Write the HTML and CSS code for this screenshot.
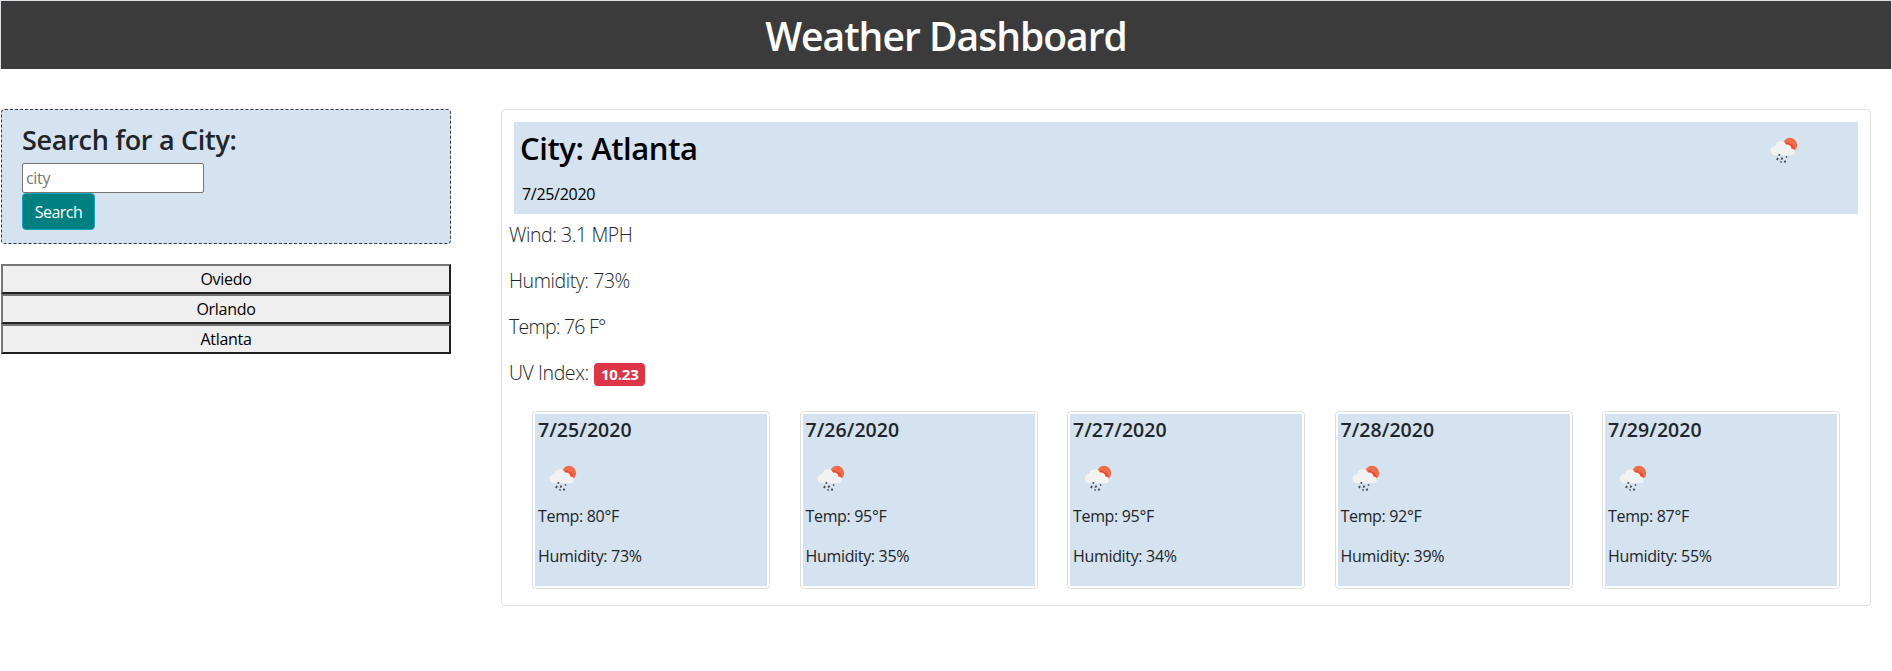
FILE: index.html
```html
<!DOCTYPE html>
<html lang="en">
<head>
<meta charset="utf-8">
<title>Weather Dashboard</title>
<link rel="stylesheet" href="styles.css">
</head>
<body>
<svg class="sprite" aria-hidden="true">
  <symbol id="rain" viewBox="0 0 50 50">
    <circle cx="31" cy="19" r="7.200" fill="#ec6e4c"/>
    <path d="M26 17.500c1.500-2 4.300-1.500 5 .5 2.500 0 4 1.500 4.500 4.500l-.5 1.500-3 0-6-4z" fill="#eb4d2a"/>
    <path d="M16.300 29.300a4.600 4.600 0 0 1-.2-9.200h.5a5.400 5.400 0 0 1 10.400-1.500 4.300 4.300 0 0 1 5.400 3.800 3.500 3.500 0 0 1 .8 6.900z" fill="#f2f2f2"/>
    <path d="M20.700 28.200l-.7 1.500M19 32l-1 2M23.400 31.600l-1.100 2M27.900 30.400l-.7 1.100M22.300 35.400l-.6 1.100M26.500 34.600l-1 1.900" stroke="#484848" stroke-width="1.800" fill="none"/>
  </symbol>
</svg>
<header class="banner"><h1>Weather Dashboard</h1></header>
<main class="layout">
  <aside class="sidebar">
    <form class="search">
      <h2>Search for a City:</h2>
      <input type="text" placeholder="city">
      <button type="button" class="search-button">Search</button>
    </form>
    <div class="history">
      <button>Oviedo</button>
      <button>Orlando</button>
      <button>Atlanta</button>
    </div>
  </aside>
  <section class="weather">
    <div class="current">
      <div class="place">
        <h2>City: Atlanta</h2>
        <p>7/25/2020</p>
      </div>
      <svg class="icon"><use href="#rain"/></svg>
    </div>
    <div class="details">
      <p>Wind: 3.1 MPH</p>
      <p>Humidity: 73%</p>
      <p class="temperature">Temp: 76 F°</p>
      <p>UV Index: <b class="badge">10.23</b></p>
    </div>
    <div class="forecast">
      <article class="day"><div><h3>7/25/2020</h3><svg class="icon"><use href="#rain"/></svg><p>Temp: 80°F</p><p>Humidity: 73%</p></div></article>
      <article class="day"><div><h3>7/26/2020</h3><svg class="icon"><use href="#rain"/></svg><p>Temp: 95°F</p><p>Humidity: 35%</p></div></article>
      <article class="day"><div><h3>7/27/2020</h3><svg class="icon"><use href="#rain"/></svg><p>Temp: 95°F</p><p>Humidity: 34%</p></div></article>
      <article class="day"><div><h3>7/28/2020</h3><svg class="icon"><use href="#rain"/></svg><p>Temp: 92°F</p><p>Humidity: 39%</p></div></article>
      <article class="day"><div><h3>7/29/2020</h3><svg class="icon"><use href="#rain"/></svg><p>Temp: 87°F</p><p>Humidity: 55%</p></div></article>
    </div>
  </section>
</main>
</body>
</html>
```
FILE: styles.css
```css
* { box-sizing: border-box; }
body { margin: 0; background: #fff; color: #212529; font: 400 16px/24px "Open Sans", "Noto Sans", sans-serif; }
h1, h2, h3, p { margin: 0; }
button, input { font: inherit; letter-spacing: inherit; }
.sprite { position: absolute; width: 0; height: 0; }
.banner { height: 69px; border: 1px solid #dee2e6; border-bottom: 0; background: #3b3b3b; color: #fff; text-align: center; }
.banner h1 { font-size: 39px; font-weight: 600; line-height: 48px; padding-top: 11px; letter-spacing: -0.98px; }
.layout { display: flex; align-items: flex-start; gap: 50px; padding: 40px 21px 0 1px; }
.sidebar { width: 450px; flex: none; }
.search { height: 135px; padding: 13px 20px; display: flex; flex-direction: column; align-items: flex-start; border: 1px dashed #343a40; border-radius: 4px; background: #d5e2ef; }
.search h2 { font-size: 27px; font-weight: 600; line-height: 34px; margin-bottom: 6px; letter-spacing: -0.3px; }
.search input { width: 182px; height: 30px; padding: 1px 3px; border: 1px solid #767676; border-radius: 2px; background: #fff; letter-spacing: -0.3px; }
.search input::placeholder { color: #757575; opacity: 1; }
.search-button { width: 73px; height: 38px; padding: 2px 0 0; border: 1px solid #17a2b8; border-radius: 4px; background: #008080; color: #fff; letter-spacing: -0.5px; }
.history { margin-top: 20px; display: flex; flex-direction: column; }
.history button { height: 30px; padding: 0; border: 2px solid; border-color: #767676 #212121 #212121 #767676; background: #efefef; color: #000; letter-spacing: -0.3px; }
.weather { flex: 1; height: 497px; padding: 12px; border: 1px solid #dfdfdf; border-radius: 4px; }
.current { height: 92px; display: flex; justify-content: space-between; padding: 4px 49px 0 6px; background: #d5e2ef; color: #000; }
.current h2 { font-size: 31px; font-weight: 600; line-height: 46px; letter-spacing: -0.42px; margin-top: -1px; }
.current p { padding: 11px 0 0 2px; letter-spacing: -0.3px; }
.icon { display: block; width: 50px; height: 50px; }
.details { margin-left: -5px; padding-top: 6px; font-size: 19.5px; font-weight: 300; line-height: 30px; letter-spacing: -0.42px; }
.details p { height: 30px; margin-bottom: 16px; }
.details .temperature { letter-spacing: -0.75px; }
.badge { display: inline-block; width: 51px; height: 23px; margin-left: 1px; border-radius: 4px; background: #dc3545; color: #fff; font-size: 15px; font-weight: 700; line-height: 23px; text-align: center; letter-spacing: -0.15px; }
.forecast { display: grid; grid-template-columns: repeat(5, 238px); justify-content: space-between; padding: 7px 18px 0; }
.day { height: 178px; padding: 2px; border: 1px solid #dfdfdf; border-radius: 4px; }
.day > div { height: 172px; padding: 4px 3px; background: #d5e2ef; }
.day h3 { font-size: 19.5px; font-weight: 600; line-height: 24px; margin-bottom: 12px; letter-spacing: 0.05px; }
.day p { margin-bottom: 16px; letter-spacing: -0.33px; }
```
